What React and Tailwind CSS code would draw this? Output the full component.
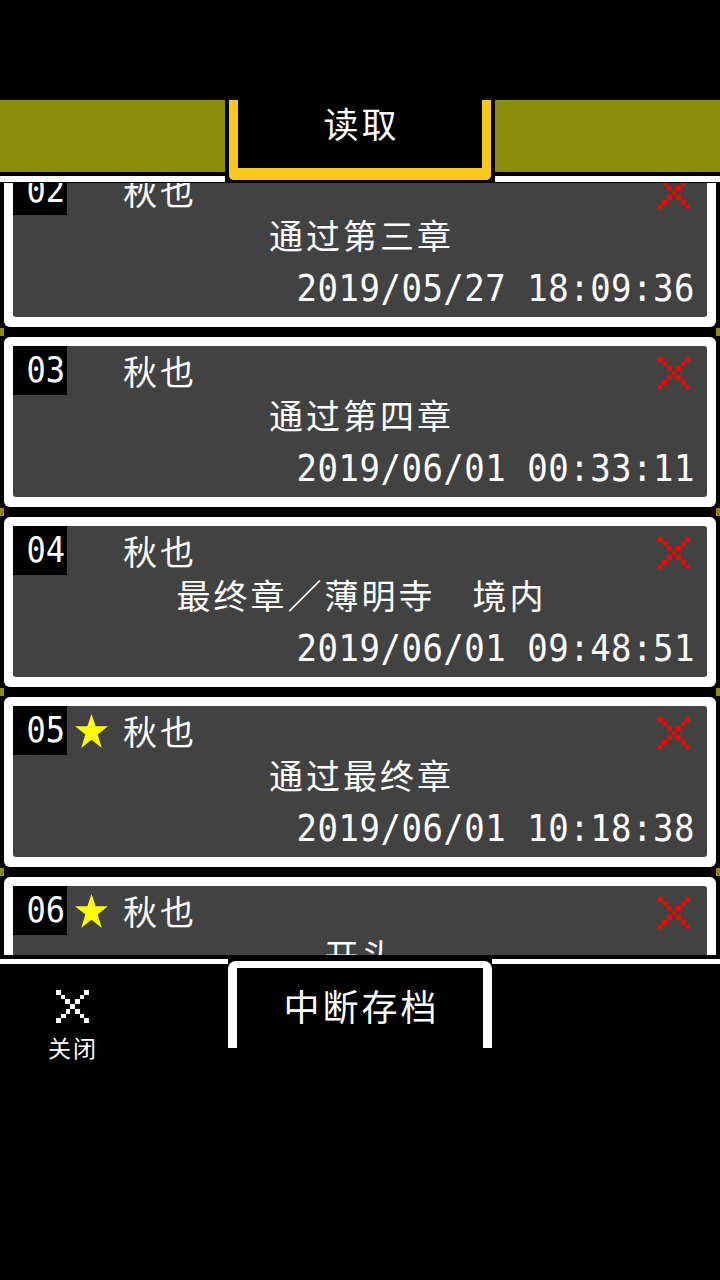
import React from "react";

const cjk = "font-['Noto_Sans_CJK_SC',sans-serif]";
const mono = "font-['DejaVu_Sans_Mono',monospace]";

const saves = [
  { no: "02", star: false, name: "秋也", title: "通过第三章", date: "2019/05/27 18:09:36" },
  { no: "03", star: false, name: "秋也", title: "通过第四章", date: "2019/06/01 00:33:11" },
  { no: "04", star: false, name: "秋也", title: "最终章／薄明寺　境内", date: "2019/06/01 09:48:51" },
  { no: "05", star: true, name: "秋也", title: "通过最终章", date: "2019/06/01 10:18:38" },
  { no: "06", star: true, name: "秋也", title: "开头", date: null }
];

// pixel style X made of small squares
const PixelX = ({ color, size = 33, cell = 4.7 }) => {
  const n = Math.round(size / cell);
  const cells = [];
  for (let i = 0; i < n; i++) {
    cells.push(<rect key={"a" + i} x={i * cell} y={i * cell} width={cell} height={cell} />);
    cells.push(<rect key={"b" + i} x={size - cell - i * cell} y={i * cell} width={cell} height={cell} />);
  }
  return (
    <svg width={size} height={size} viewBox={`0 0 ${size} ${size}`} fill={color} shapeRendering="crispEdges">
      {cells}
    </svg>
  );
};

const Star = () => (
  <svg width="35" height="36" viewBox="0 0 34 35" fill="#ffff00">
    <polygon points="17,1 21,13 33,13 23,21 27,34 17,26 7,34 11,21 1,13 13,13" />
  </svg>
);

const Gap = () => (
  <div className="h-[10px] flex items-center justify-between">
    <div className="w-[4px] h-[8px] bg-[#8c8c0c]" />
    <div className="w-[4px] h-[8px] bg-[#8c8c0c]" />
  </div>
);

const SaveCard = ({ save }) => (
  <div className="mx-[4px] h-[170px] bg-white rounded-[6px] pt-[9px] px-[9px] pb-[10px]">
    <div className="h-full bg-[#424242] rounded-[3px] flex flex-col text-white">
      <div className="h-[49px] flex items-center">
        <div className={`${mono} w-[54px] h-[49px] bg-black text-right pr-[2px] text-[32px] leading-[49px]`}>
          <span className="inline-block scale-y-110">{save.no}</span>
        </div>
        <div className="w-[56px] pl-[7px] flex">{save.star && <Star />}</div>
        <div className={`${cjk} text-[34px] leading-[40px] tracking-[3px]`}>{save.name}</div>
        <div className="ml-auto mr-[17px] self-start mt-[11px]">
          <PixelX color="#ff0000" size={32} cell={4.6} />
        </div>
      </div>
      <div className={`${cjk} h-[40px] text-center text-[34px] leading-[40px] tracking-[3px] pl-[3px]`}>
        {save.title}
      </div>
      {save.date && (
        <div className={`${mono} mt-[13px] text-right pr-[12px] text-[34px] leading-[40px] tracking-[0.5px]`}>
          <span className="inline-block scale-y-110">{save.date}</span>
        </div>
      )}
    </div>
  </div>
);

export default function App() {
  return (
    <div className="w-[720px] h-[1280px] bg-black overflow-hidden">
      <div className="h-[100px]" />

      {/* header */}
      <div className="h-[83px] flex">
        <div className="flex-1 flex flex-col">
          <div className="h-[72px] bg-[#8c8c0c]" />
          <div className="h-[4px]" />
          <div className="h-[6px] bg-white" />
        </div>
        <div className="w-[270px] px-[4px] pb-[3px]">
          <div className="h-full border-x-[9px] border-b-[12px] border-[#f8c81c] rounded-b-[5px] pt-[3px]">
            <div className={`${cjk} text-white text-center text-[35px] leading-[40px] tracking-[3px] pl-[3px]`}>读取</div>
          </div>
        </div>
        <div className="flex-1 flex flex-col">
          <div className="h-[72px] bg-[#8c8c0c]" />
          <div className="h-[4px]" />
          <div className="h-[6px] bg-white" />
        </div>
      </div>

      {/* save list */}
      <div className="h-[772px] overflow-hidden">
        <div className="-mt-[26px]">
          {saves.map((s, i) => (
            <div key={s.no}>
              {i > 0 && <Gap />}
              <SaveCard save={s} />
            </div>
          ))}
        </div>
      </div>

      {/* footer */}
      <div className="flex">
        <div className="flex-1 flex flex-col">
          <div className="h-[4px]" />
          <div className="h-[5px] bg-white" />
          <div className="ml-[46px] w-[52px] mt-[26px] flex flex-col items-center">
            <PixelX color="#ffffff" size={33} cell={4.7} />
            <div className={`${cjk} mt-[12px] text-white text-[23px] leading-[24px] tracking-[2px] pl-[2px]`}>关闭</div>
          </div>
        </div>
        <div className="w-[264px] pt-[6px]">
          <div className="h-[87px] border-x-[9px] border-t-[7px] border-white rounded-t-[8px] pt-[17px]">
            <div className={`${cjk} text-white text-center text-[36px] leading-[40px] tracking-[3px] pl-[3px]`}>中断存档</div>
          </div>
        </div>
        <div className="flex-1 flex flex-col">
          <div className="h-[4px]" />
          <div className="h-[5px] bg-white" />
        </div>
      </div>
    </div>
  );
}
